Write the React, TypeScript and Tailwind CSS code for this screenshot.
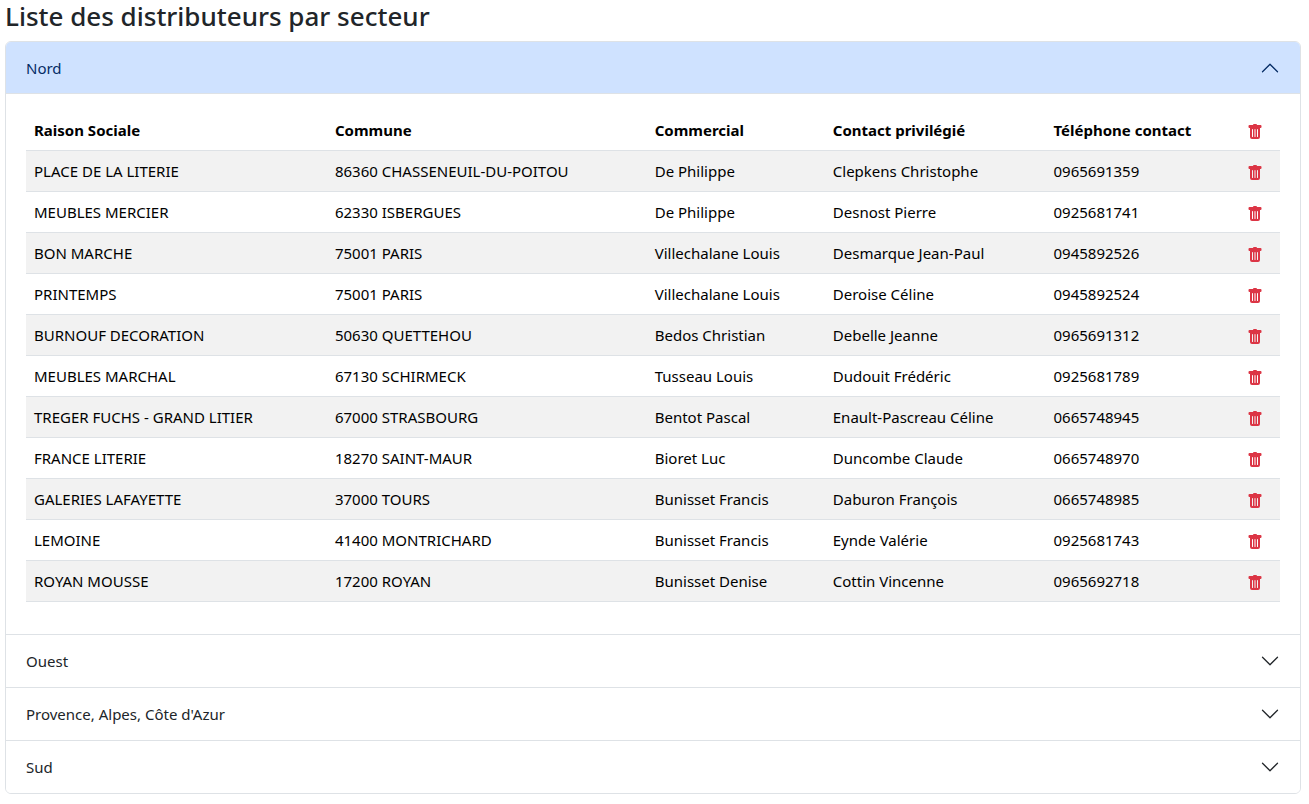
import { useState } from "react";
import { BsChevronDown, BsTrashFill } from "react-icons/bs";

interface Distributeur {
  raisonSociale: string;
  commune: string;
  commercial: string;
  contact: string;
  telephone: string;
}

interface Secteur {
  id: string;
  nom: string;
  distributeurs: Distributeur[];
}

const row = (
  raisonSociale: string,
  commune: string,
  commercial: string,
  contact: string,
  telephone: string
): Distributeur => ({ raisonSociale, commune, commercial, contact, telephone });

const initialSecteurs: Secteur[] = [
  {
    id: "nord",
    nom: "Nord",
    distributeurs: [
      row("PLACE DE LA LITERIE", "86360 CHASSENEUIL-DU-POITOU", "De Philippe", "Clepkens Christophe", "0965691359"),
      row("MEUBLES MERCIER", "62330 ISBERGUES", "De Philippe", "Desnost Pierre", "0925681741"),
      row("BON MARCHE", "75001 PARIS", "Villechalane Louis", "Desmarque Jean-Paul", "0945892526"),
      row("PRINTEMPS", "75001 PARIS", "Villechalane Louis", "Deroise Céline", "0945892524"),
      row("BURNOUF DECORATION", "50630 QUETTEHOU", "Bedos Christian", "Debelle Jeanne", "0965691312"),
      row("MEUBLES MARCHAL", "67130 SCHIRMECK", "Tusseau Louis", "Dudouit Frédéric", "0925681789"),
      row("TREGER FUCHS - GRAND LITIER", "67000 STRASBOURG", "Bentot Pascal", "Enault-Pascreau Céline", "0665748945"),
      row("FRANCE LITERIE", "18270 SAINT-MAUR", "Bioret Luc", "Duncombe Claude", "0665748970"),
      row("GALERIES LAFAYETTE", "37000 TOURS", "Bunisset Francis", "Daburon François", "0665748985"),
      row("LEMOINE", "41400 MONTRICHARD", "Bunisset Francis", "Eynde Valérie", "0925681743"),
      row("ROYAN MOUSSE", "17200 ROYAN", "Bunisset Denise", "Cottin Vincenne", "0965692718"),
    ],
  },
  { id: "ouest", nom: "Ouest", distributeurs: [] },
  { id: "paca", nom: "Provence, Alpes, Côte d'Azur", distributeurs: [] },
  { id: "sud", nom: "Sud", distributeurs: [] },
];

interface DeleteButtonProps {
  label: string;
  onClick: () => void;
}

function DeleteButton(props: DeleteButtonProps) {
  return (
    <button
      type="button"
      aria-label={props.label}
      onClick={props.onClick}
      className="block cursor-pointer pt-1 text-[#dc3545]"
    >
      <BsTrashFill className="size-4" />
    </button>
  );
}

interface TableProps {
  distributeurs: Distributeur[];
  onDelete: (index: number) => void;
  onDeleteAll: () => void;
}

function DistributeursTable(props: TableProps) {
  return (
    <table className="mb-4 w-full table-fixed border-collapse text-left text-black">
      <thead>
        <tr className="h-10 border-b border-[#dee2e6]">
          <th className="w-[24%] px-2 font-bold">Raison Sociale</th>
          <th className="w-[25.5%] px-2 font-bold">Commune</th>
          <th className="w-[14.2%] px-2 font-bold">Commercial</th>
          <th className="w-[17.6%] px-2 font-bold">Contact privilégié</th>
          <th className="w-[15.3%] px-2 font-bold">Téléphone contact</th>
          <th className="pl-[10px]">
            <DeleteButton label="Tout supprimer" onClick={props.onDeleteAll} />
          </th>
        </tr>
      </thead>
      <tbody>
        {props.distributeurs.map((item, index) => (
          <tr
            key={item.raisonSociale}
            className="h-[41px] border-b border-[#dee2e6] odd:bg-[#f2f2f2]"
          >
            <td className="px-2">{item.raisonSociale}</td>
            <td className="px-2">{item.commune}</td>
            <td className="px-2">{item.commercial}</td>
            <td className="px-2">{item.contact}</td>
            <td className="px-2">{item.telephone}</td>
            <td className="pl-[10px]">
              <DeleteButton
                label={"Supprimer " + item.raisonSociale}
                onClick={() => props.onDelete(index)}
              />
            </td>
          </tr>
        ))}
      </tbody>
    </table>
  );
}

export default function App() {
  const [secteurs, setSecteurs] = useState(initialSecteurs);
  const [openId, setOpenId] = useState<string | null>("nord");

  const keep = (id: string, test: (index: number) => boolean) =>
    setSecteurs(
      secteurs.map((s) =>
        s.id === id
          ? { ...s, distributeurs: s.distributeurs.filter((_, i) => test(i)) }
          : s
      )
    );

  return (
    <main className="bg-white pr-2 pl-[5px] font-['Segoe_UI','Noto_Sans',sans-serif] text-[15px] leading-6 text-[#212529]">
      <h1 className="mb-2 text-[26px] leading-[33px] font-medium">
        Liste des distributeurs par secteur
      </h1>
      <div className="divide-y divide-[#dee2e6] overflow-hidden rounded-md border border-[#dee2e6]">
        {secteurs.map((secteur) => {
          const open = secteur.id === openId;
          return (
            <section key={secteur.id}>
              <h2>
                <button
                  type="button"
                  aria-expanded={open}
                  aria-controls={secteur.id}
                  onClick={() => setOpenId(open ? null : secteur.id)}
                  className={
                    open
                      ? "flex h-[52px] w-full cursor-pointer items-center justify-between bg-[#cfe2ff] px-5 text-[#052c65] shadow-[inset_0_-1px_0_#dee2e6]"
                      : "flex h-[52px] w-full cursor-pointer items-center justify-between bg-white px-5"
                  }
                >
                  {secteur.nom}
                  <BsChevronDown className={open ? "size-5 rotate-180" : "size-5"} />
                </button>
              </h2>
              <div id={secteur.id} hidden={!open} className="px-5 py-4">
                <DistributeursTable
                  distributeurs={secteur.distributeurs}
                  onDelete={(index) => keep(secteur.id, (i) => i !== index)}
                  onDeleteAll={() => keep(secteur.id, () => false)}
                />
              </div>
            </section>
          );
        })}
      </div>
    </main>
  );
}
